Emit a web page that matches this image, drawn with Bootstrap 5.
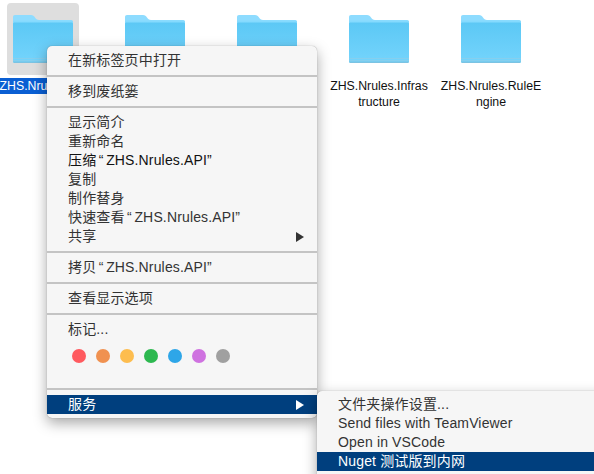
<!DOCTYPE html>
<html lang="zh">
<head>
    <meta charset="UTF-8">
    <title>ZHS.Nrules</title>
    <link href="https://cdn.jsdelivr.net/npm/bootstrap@5.3.0/dist/css/bootstrap.min.css" rel="stylesheet">
    <style>
        html, body {
            height: 474px;
            overflow: hidden;
        }
        body {
            background: #fff;
            color: #111;
            font-family: "Liberation Sans", "Noto Sans CJK SC", sans-serif;
            font-size: 12.3px;
            position: relative;
        }
        .file-row {
            margin-left: -13px;
            padding-top: 3px;
        }
        .file-cell {
            width: 112px;
            flex: none;
            text-align: center;
        }
        .file-thumb {
            width: 72px;
            height: 72px;
            margin: 0 auto 2px;
            border-radius: 4px;
            padding-top: 12px;
        }
        .file-cell.picked .file-thumb {
            background: #dedede;
        }
        .file-thumb svg {
            display: block;
            margin: 0 auto;
        }
        .file-name {
            width: 108px;
            margin: 0 auto;
            line-height: 16px;
            padding-top: 1px;
            white-space: nowrap;
        }
        .file-cell.picked .file-name span {
            background: #0a5fd3;
            color: #fff;
            padding: 1px 2px;
        }
        .ctx-menu {
            position: absolute;
            background: #f6f6f6;
            border-radius: 5px;
            box-shadow: 0 5px 14px rgba(0, 0, 0, .35), 0 0 1px rgba(0, 0, 0, .4);
            font-size: 14px;
            letter-spacing: .15px;
            color: #333;
        }
        .ctx-main {
            left: 47px;
            top: 46px;
            width: 270px;
            height: 372px;
            padding-top: 5px;
        }
        .ctx-sub {
            left: 317px;
            top: 391px;
            width: 290px;
            height: 90px;
            padding-top: 4px;
            overflow: hidden;
        }
        .ctx-item {
            height: 19px;
            line-height: 19px;
            padding: 0 13px 0 21px;
            white-space: nowrap;
        }
        .ctx-item.dark {
            color: #111;
        }
        .ctx-item.active-row {
            background: #003f7e;
            color: #fff;
        }
        .ctx-line {
            height: 2px;
            background: #c4c4c4;
            margin: 5px 0;
        }
        .ctx-arrow {
            width: 0;
            height: 0;
            border-left: 8px solid #333;
            border-top: 5px solid transparent;
            border-bottom: 5px solid transparent;
        }
        .active-row .ctx-arrow {
            border-left-color: #fff;
        }
        .tag-row {
            padding: 10px 0 0 25px;
            height: 44px;
            gap: 10px;
        }
        .tag-dot {
            width: 14px;
            height: 14px;
            border-radius: 50%;
        }
        .wide-quote {
            margin: 0 2.5px;
        }
    </style>
</head>
<body>
    <svg width="0" height="0" class="d-block">
        <defs>
            <linearGradient id="folderBody" x1="0" y1="0" x2="0" y2="1">
                <stop offset="0" stop-color="#5cc8f5"/>
                <stop offset="1" stop-color="#74d4fc"/>
            </linearGradient>
            <symbol id="folder" viewBox="0 0 60 48">
                <path d="M2 0H18C20 0 21 1 22 2.500C23 4 24 5 26 5H58C59.200 5 60 5.800 60 7V20H0V2C0 .8.800 0 2 0Z" fill="#8edcff"/>
                <path d="M1.500 5.500H58.500C59.400 5.500 60 6.100 60 7V46C60 47.200 59.200 48 58 48H2C.8 48 0 47.200 0 46V7C0 6.100.6 5.500 1.500 5.500Z" fill="#85dafe"/>
                <path d="M0 9C0 8 .7 7.500 1.500 7.500H58.500C59.300 7.500 60 8 60 9V46C60 47.200 59.200 48 58 48H2C.8 48 0 47.200 0 46Z" fill="url(#folderBody)"/>
                <rect y="43" width="60" height="1" fill="#86cfee"/>
                <rect y="45" width="60" height="1" fill="#86cfee"/>
                <path d="M0 46.500H60C60 47.400 59.200 48 58 48H2C.8 48 0 47.400 0 46.500Z" fill="#7cc3e2"/>
            </symbol>
        </defs>
    </svg>

    <div class="d-flex file-row">
        <div class="file-cell picked">
            <div class="file-thumb"><svg width="60" height="48"><use href="#folder"/></svg></div>
            <div class="file-name"><span>ZHS.Nrules.API</span></div>
        </div>
        <div class="file-cell">
            <div class="file-thumb"><svg width="60" height="48"><use href="#folder"/></svg></div>
        </div>
        <div class="file-cell">
            <div class="file-thumb"><svg width="60" height="48"><use href="#folder"/></svg></div>
        </div>
        <div class="file-cell">
            <div class="file-thumb"><svg width="60" height="48"><use href="#folder"/></svg></div>
            <div class="file-name">ZHS.Nrules.Infras<br>tructure</div>
        </div>
        <div class="file-cell">
            <div class="file-thumb"><svg width="60" height="48"><use href="#folder"/></svg></div>
            <div class="file-name">ZHS.Nrules.RuleE<br>ngine</div>
        </div>
    </div>

    <div class="ctx-menu ctx-main">
        <div class="ctx-item">在新标签页中打开</div>
        <div class="ctx-line"></div>
        <div class="ctx-item">移到废纸篓</div>
        <div class="ctx-line"></div>
        <div class="ctx-item">显示简介</div>
        <div class="ctx-item">重新命名</div>
        <div class="ctx-item dark">压缩<span class="wide-quote">“</span>ZHS.Nrules.API”</div>
        <div class="ctx-item">复制</div>
        <div class="ctx-item">制作替身</div>
        <div class="ctx-item">快速查看<span class="wide-quote">“</span>ZHS.Nrules.API”</div>
        <div class="ctx-item d-flex justify-content-between align-items-center">共享<span class="ctx-arrow"></span></div>
        <div class="ctx-line"></div>
        <div class="ctx-item">拷贝<span class="wide-quote">“</span>ZHS.Nrules.API”</div>
        <div class="ctx-line"></div>
        <div class="ctx-item">查看显示选项</div>
        <div class="ctx-line"></div>
        <div class="ctx-item">标记...</div>
        <div class="d-flex tag-row" id="tags"></div>
        <div class="ctx-line"></div>
        <div class="ctx-item active-row d-flex justify-content-between align-items-center">服务<span class="ctx-arrow"></span></div>
    </div>

    <div class="ctx-menu ctx-sub">
        <div class="ctx-item">文件夹操作设置...</div>
        <div class="ctx-item">Send files with TeamViewer</div>
        <div class="ctx-item">Open in VSCode</div>
        <div class="ctx-item active-row">Nuget 测试版到内网</div>
    </div>

    <script>
        // tag colours, left to right
        var tagColors = ['#ff5a5f', '#f09150', '#fdbd4f', '#2db84f', '#2ea6e8', '#cf72e0', '#a0a0a0'];
        var tags = document.getElementById('tags');
        tagColors.forEach(function (c) {
            var dot = document.createElement('span');
            dot.className = 'tag-dot';
            dot.style.background = c;
            tags.appendChild(dot);
        });
    </script>
    <script src="https://cdn.jsdelivr.net/npm/bootstrap@5.3.0/dist/js/bootstrap.bundle.min.js"></script>
</body>
</html>
